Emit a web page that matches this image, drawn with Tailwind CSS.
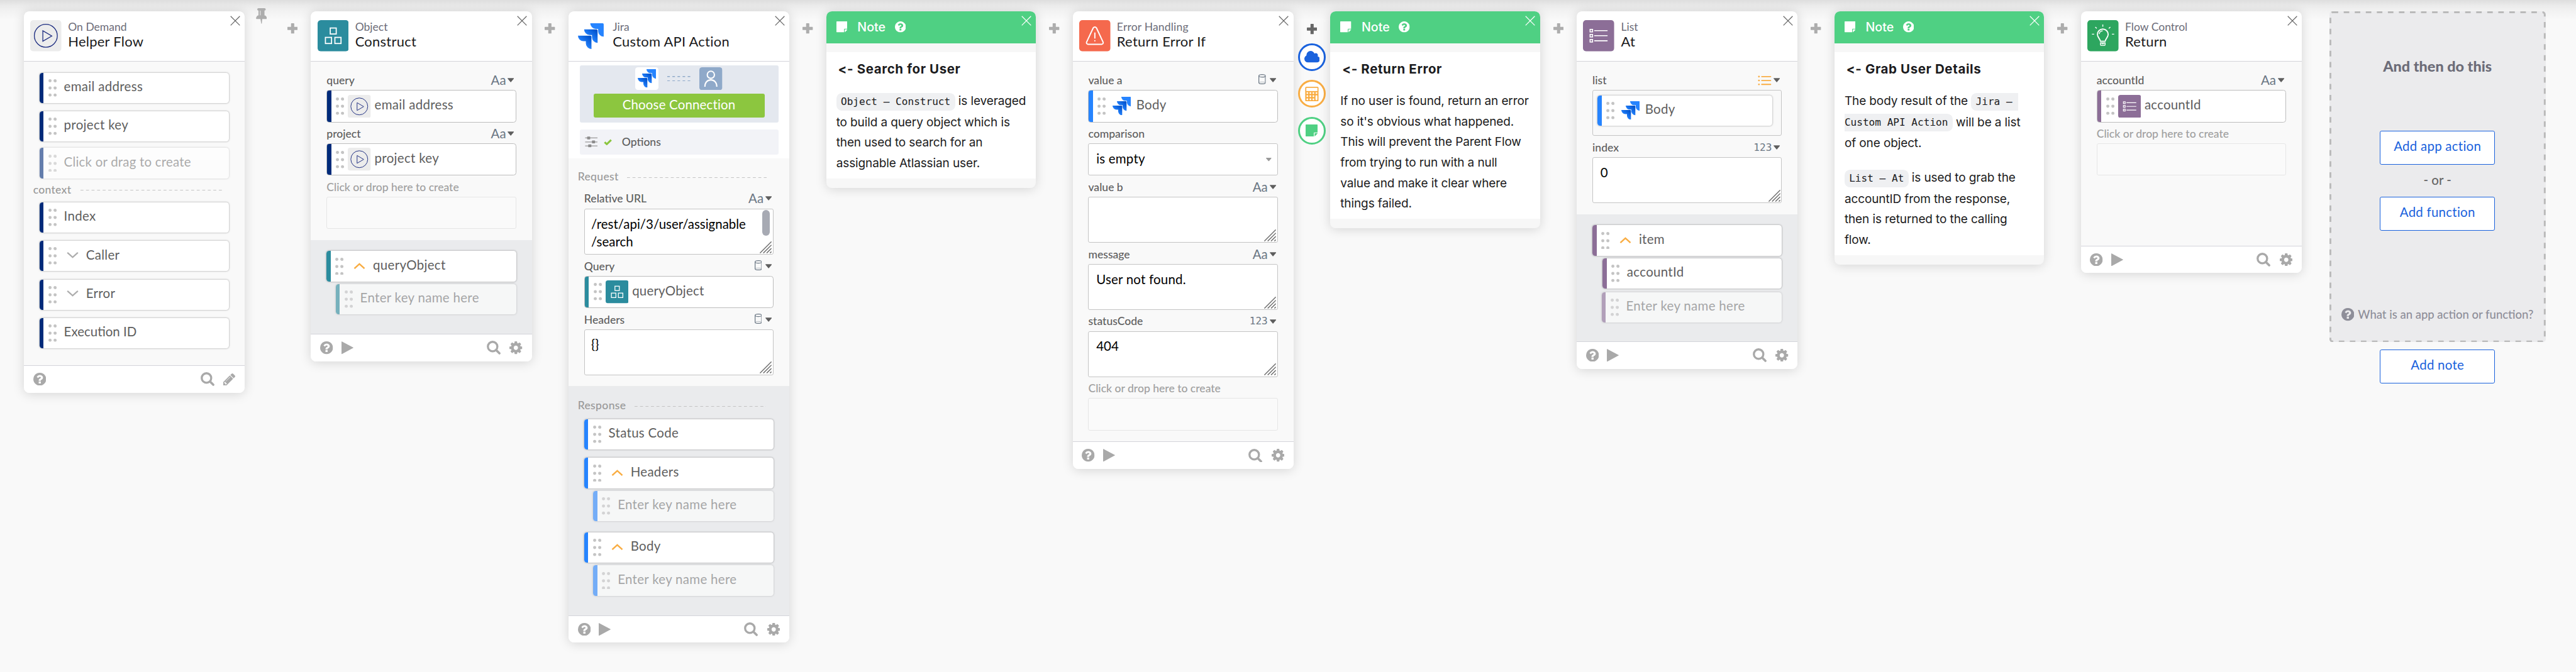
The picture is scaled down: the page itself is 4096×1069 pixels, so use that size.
<!DOCTYPE html>
<html lang="en" class="text-[23.4057px]">
<head>
<meta charset="utf-8">
<title>Helper Flow</title>
<script src="https://cdn.jsdelivr.net/npm/@tailwindcss/browser@4"></script>
</head>
<body class="h-screen overflow-hidden bg-[#f9f9f9] bg-[linear-gradient(#dedede_0,#ebebeb_0.375rem,#f2f2f2_0.75rem,#f9f9f9_1.375rem)] font-[Lato,sans-serif] text-sm text-[#5e5e5e] antialiased">

<!-- icon library -->
<svg class="absolute size-0">
  <defs>
    <linearGradient id="jg" x1="1" y1="0.1" x2="0.45" y2="0.7"><stop offset="0.1" stop-color="#0052cc"/><stop offset="1" stop-color="#2684ff"/></linearGradient>
  </defs>
  <symbol id="dots" viewBox="0 0 18 38"><g fill="#c4c4c4"><circle cx="3.5" cy="3.5" r="3.4"/><circle cx="14.5" cy="3.500" r="3.4"/><circle cx="3.5" cy="19" r="3.4"/><circle cx="14.5" cy="19" r="3.4"/><circle cx="3.5" cy="34.5" r="3.4"/><circle cx="14.5" cy="34.5" r="3.4"/></g></symbol>
  <symbol id="plus" viewBox="0 0 23 23"><path fill="currentColor" d="M9 0h5a1 1 0 0 1 1 1v7h7a1 1 0 0 1 1 1v5a1 1 0 0 1-1 1h-7v7a1 1 0 0 1-1 1H9a1 1 0 0 1-1-1v-7H1a1 1 0 0 1-1-1V9a1 1 0 0 1 1-1h7V1a1 1 0 0 1 1-1z"/></symbol>
  <symbol id="close" viewBox="0 0 22 22"><path d="M1 1l20 20M21 1L1 21" fill="none" stroke="currentColor" stroke-width="1.7"/></symbol>
  <symbol id="down" viewBox="0 0 25 14"><path d="M2 2l10.500 9.300L23 2" fill="none" stroke="currentColor" stroke-width="3.200" stroke-linecap="round"/></symbol>
  <symbol id="up" viewBox="0 0 25 14"><path d="M1.500 12.500L12.500 2.500l11 10" fill="none" stroke="currentColor" stroke-width="3.400"/></symbol>
  <symbol id="caret" viewBox="0 0 14 9"><path d="M.6 0h12.800a.6.6 0 0 1 .4 1L7.600 8.400a.8.8 0 0 1-1.200 0L.2 1a.6.6 0 0 1 .4-1z" fill="currentColor"/></symbol>
  <symbol id="help" viewBox="128 128 1536 1536"><path fill="currentColor" d="M1024 1376v-192q0-14-9-23t-23-9H800q-14 0-23 9t-9 23v192q0 14 9 23t23 9h192q14 0 23-9t9-23zm256-672q0-88-55.5-163T1086 425t-170-41q-243 0-371 213-15 24 8 42l132 100q7 6 19 6 16 0 25-12 53-68 86-92 34-24 86-24 48 0 85.5 26t37.5 59q0 38-20 61t-68 45q-63 28-115.5 86.5T768 1020v36q0 14 9 23t23 9h192q14 0 23-9t9-23q0-19 21.5-49.5T1100 957q32-18 49-28.500t46-35 44.5-48 28-60.5 12.5-81zm384 192q0 209-103 385.5T1281.5 1561 896 1664t-385.5-103T231 1281.5 128 896t103-385.5T510.5 231 896 128t385.5 103T1561 510.5 1664 896z"/></symbol>
  <symbol id="play" viewBox="0 0 25 27"><path fill="currentColor" d="M.8.3L24.500 13a.6.6 0 0 1 0 1L.8 26.700a.5.5 0 0 1-.8-.5V.8A.5.5 0 0 1 .8.3z"/></symbol>
  <symbol id="search" viewBox="0 0 29 29"><g fill="none" stroke="currentColor"><circle cx="12.300" cy="12.300" r="10" stroke-width="4.400"/><path d="M20 20l6.600 6.400" stroke-width="4.800" stroke-linecap="round"/></g></symbol>
  <symbol id="gear" viewBox="128 128 1536 1536"><path fill="currentColor" d="M1152 896q0-106-75-181t-181-75-181 75-75 181 75 181 181 75 181-75 75-181zm512-109v222q0 12-8 23t-20 13l-185 28q-19 54-39 91 35 50 107 138 10 12 10 25t-9 23q-27 37-99 108t-94 71q-12 0-26-9l-138-108q-44 23-91 38-16 136-29 186-7 28-36 28H785q-14 0-24.500-8.500T749 1634l-28-184q-49-16-90-37l-141 107q-10 9-25 9-14 0-25-11-126-114-165-168-7-10-7-23 0-12 8-23 15-21 51-66.500t54-70.500q-27-50-41-99l-183-27q-13-2-21-12.500t-8-23.500V783q0-12 8-23t19-13l186-28q14-46 39-92-40-57-107-138-10-12-10-24 0-10 9-23 26-36 98.500-107.500T465 263q13 0 26 10l138 107q44-23 91-38 16-136 29-186 7-28 36-28h222q14 0 24.500 8.500T1043 158l28 184q49 16 90 37l142-107q9-9 24-9 13 0 25 10 129 119 165 170 7 8 7 22 0 12-8 23-15 21-51 66.500t-54 70.500q26 50 41 98l183 28q13 2 21 12.500t8 23.500z"/></symbol>
  <symbol id="pencil" viewBox="128 149 1515 1515"><path fill="currentColor" d="M491 1536l91-91-235-235-91 91v107h128v128h107zm523-928q0-22-22-22-10 0-17 7l-542 542q-7 7-7 17 0 22 22 22 10 0 17-7l542-542q7-7 7-17zm-54-192l416 416-832 832H128v-416zm683 96q0 53-37 90l-166 166-416-416 166-165q36-38 90-38 53 0 91 38l235 234q37 39 37 91z"/></symbol>
  <symbol id="pin" viewBox="320 128 1152 1664"><path fill="currentColor" d="M800 864V416q0-14-9-23t-23-9-23 9-9 23v448q0 14 9 23t23 9 23-9 9-23zm672 352q0 26-19 45t-45 19H979l-51 483q-2 12-10.500 20.500T897 1792h-1q-27 0-32-27l-76-485H384q-26 0-45-19t-19-45q0-123 78.500-221.500T576 896V384q-52 0-90-38t-38-90 38-90 90-38h640q52 0 90 38t38 90-38 90-90 38v512q99 0 177.500 98.500T1472 1216z"/></symbol>
  <symbol id="sticky" viewBox="0 0 24 24"><path fill="currentColor" d="M1 0h22a1 1 0 0 1 1 1v15h-6.500a1 1 0 0 0-1 1v7H1a1 1 0 0 1-1-1V1a1 1 0 0 1 1-1zM24 17.500l-.2.7-5 5.200-.8.600v-6.500z"/></symbol>
  <symbol id="cloud" viewBox="64 128 1920 1408"><path fill="currentColor" d="M1984 1152q0 159-112.500 271.500T1600 1536H512q-185 0-316.500-131.500T64 1088q0-132 71-241.500T322 683q-2-28-2-43 0-212 150-362t362-150q158 0 286.500 88t187.500 230q70-62 166-62 106 0 181 75t75 181q0 75-41 138 129 30 213 134.500t84 239.500z"/></symbol>
  <symbol id="calc" viewBox="0 0 29 32"><rect width="29" height="32" rx="2.500" fill="currentColor"/><g fill="#fff"><rect x="2.400" y="2.400" width="24.200" height="7"/><circle cx="4.700" cy="13.800" r="2"/><circle cx="11.300" cy="13.800" r="2"/><circle cx="17.800" cy="13.800" r="2"/><circle cx="24.400" cy="13.800" r="2"/><circle cx="4.700" cy="20.500" r="2"/><circle cx="11.300" cy="20.500" r="2"/><circle cx="17.800" cy="20.500" r="2"/><circle cx="4.700" cy="27.300" r="2"/><circle cx="11.300" cy="27.300" r="2"/><circle cx="17.800" cy="27.300" r="2"/><rect x="22.400" y="18.500" width="4" height="10.800" rx="2"/></g></symbol>
  <symbol id="trigger" viewBox="0 0 68 68"><rect width="68" height="68" rx="7" fill="#ececec"/><g fill="none" stroke="#1c2c80" stroke-width="1.8"><circle cx="34" cy="34" r="25"/><path d="M27.500 23v23L47 34.500z"/></g></symbol>
  <symbol id="object" viewBox="0 0 68 68"><rect width="68" height="68" rx="7" fill="#2b8c9e"/><g fill="none" stroke="#fff" stroke-width="2.400"><rect x="27.500" y="17.200" width="13" height="13"/><rect x="17" y="37.600" width="13.300" height="13.300"/><rect x="37.600" y="37.600" width="13.300" height="13.300"/></g></symbol>
  <symbol id="list" viewBox="0 0 68 68"><rect width="68" height="68" rx="7" fill="#8c6e97"/><g fill="none" stroke="#fff" stroke-width="2.200"><rect x="15.500" y="20.200" width="5.400" height="5.400"/><rect x="15.500" y="31.200" width="5.400" height="5.400"/><rect x="15.500" y="42.200" width="5.400" height="5.400"/><path d="M24.500 22.900h29M24.500 33.900h29M24.500 44.900h29"/></g></symbol>
  <symbol id="alert" viewBox="0 0 68 68"><rect width="68" height="68" rx="7" fill="#f5694d"/><g fill="none" stroke="#fff" stroke-width="2.700" stroke-linecap="round" stroke-linejoin="round"><path d="M30.600 16.800a4 4 0 0 1 6.800 0L52 48a3.300 3.300 0 0 1-3 4.500H19a3.300 3.300 0 0 1-3-4.500z"/><path d="M34 28v11M34 44.800v.4"/></g></symbol>
  <symbol id="bulb" viewBox="0 0 68 68"><rect width="68" height="68" rx="7" fill="#2da65f"/><g fill="none" stroke="#fff" stroke-width="2.500"><path d="M28.500 46c0-4.500-6.600-8-6.600-14.800a11.700 11.700 0 0 1 23.400 0C45.300 38 38.700 41.500 38.700 46z" stroke-linejoin="round"/><path d="M25.800 30.500a8 8 0 0 1 7.500-7.300M28.600 49.600h10v3.800a1.800 1.800 0 0 1-1.800 1.800h-6.400a1.800 1.800 0 0 1-1.800-1.800zM31 51.800h5.200" stroke-width="2"/><path d="M10 30.600h4.800M53.500 30.600h4.800M33.600 9.500v4.800M17.300 15l3.200 3.200M50 15l-3.300 3.200" stroke-width="2"/></g></symbol>
  <symbol id="jira" viewBox="0 0 24 24"><path fill="#2684ff" d="M23.013 0H11.455a5.215 5.215 0 0 0 5.215 5.215h2.129v2.057A5.215 5.215 0 0 0 24 12.483V1.005A1.001 1.001 0 0 0 23.013 0z"/><path fill="url(#jg)" d="M17.294 5.757H5.736a5.215 5.215 0 0 0 5.215 5.214h2.129v2.058a5.218 5.218 0 0 0 5.215 5.214V6.758a1.001 1.001 0 0 0-1.001-1.001z"/><path fill="url(#jg)" d="M11.571 11.513H0a5.218 5.218 0 0 0 5.232 5.215h2.130v2.057A5.215 5.215 0 0 0 12.575 24V12.518a1.005 1.005 0 0 0-1.005-1.005z"/></symbol>
  <symbol id="user" viewBox="0 0 50 50"><rect width="50" height="50" rx="6" fill="#8fa9c9"/><g fill="none" stroke="#fff" stroke-width="2.800"><circle cx="25" cy="16.300" r="7.800"/><path d="M12 42.300C12 33 17.500 27.500 25 27.500S38 33 38 42.300"/></g></symbol>
  <symbol id="cyl" viewBox="0 0 16 22"><g fill="none" stroke="#6b7784" stroke-width="1.700"><ellipse cx="8" cy="3.600" rx="7.100" ry="2.700"/><path d="M.9 3.600v14.800c0 1.600 3.200 2.700 7.100 2.700s7.100-1.100 7.100-2.700V3.600"/><path d="M2 18c2-1.400 10-1.400 12 0" stroke-width="1" stroke-dasharray="1.500 1"/></g></symbol>
  <symbol id="rows" viewBox="0 0 29 22"><g stroke="#f9ad43" stroke-width="2.400" stroke-linecap="round"><path d="M8 2.500h19.500M8 11h19.500M8 19.500h19.500"/><path d="M1.900 2.500h.2M1.900 11h.2M1.900 19.500h.2" stroke-width="3.600"/></g></symbol>
  <symbol id="sliders" viewBox="0 0 28 25"><path d="M0 3.500h28M0 12.500h28M0 21.500h28" stroke="#999" stroke-width="1.800"/><g fill="#8c8c8c"><rect x="4.500" y=".3" width="7" height="6.500" rx="1"/><rect x="15.500" y="9.200" width="7" height="6.500" rx="1"/><rect x="7" y="18.200" width="7" height="6.500" rx="1"/></g></symbol>
  <symbol id="check" viewBox="0 0 17 13"><path d="M1.800 6.600l4.400 4L15.200 2" fill="none" stroke="#8bc53f" stroke-width="4"/></symbol>
  <symbol id="grip" viewBox="0 0 25 25"><path d="M.5 24.500l24-24M7.500 24.500l17-17M14.500 24.500l10-10M21.500 24.500l3-3" fill="none" stroke="#6f6f6f" stroke-width="1.900"/></symbol>
</svg>

<main class="flex items-start pt-3 pl-6.5">

  <!-- On Demand: Helper Flow -->
  <section class="w-60 shrink-0 overflow-hidden rounded-md bg-[#f9f9f9] shadow-[0_0.0625rem_0.75rem_rgba(0,0,0,0.15)]">
    <header class="flex h-13.75 border-b border-[#d4d4da] bg-white pt-2.5 pr-[0.3125rem] pl-1.75">
      <svg class="size-8.5 shrink-0"><use href="#trigger"/></svg>
      <div class="mt-[-0.0625rem] ml-1.75 grow">
        <p class="text-xs leading-4 text-[#6c6c78]">On Demand</p>
        <h2 class="text-[0.9375rem] leading-4 tracking-[0.012em] text-[#1b1b20]">Helper Flow</h2>
      </div>
      <svg class="-mt-1.25 size-2.75 text-[#666]"><use href="#close"/></svg>
    </header>
    <div class="px-4.25 pt-3 pb-4.5 tracking-[0.015em]">
      <div class="flex h-8.25 items-center overflow-hidden rounded-[0.1875rem] bg-white shadow-[0_0_0.125rem_rgba(0,0,0,0.4)]"><i class="h-full w-[0.28rem] bg-[#002b7a]"></i><svg class="ml-1.25 h-4.75 w-2.25"><use href="#dots"/></svg><span class="ml-2 pb-[0.1875rem]">email address</span></div>
      <div class="mt-2.25 flex h-8.25 items-center overflow-hidden rounded-[0.1875rem] bg-white shadow-[0_0_0.125rem_rgba(0,0,0,0.4)]"><i class="h-full w-[0.28rem] bg-[#002b7a]"></i><svg class="ml-1.25 h-4.75 w-2.25"><use href="#dots"/></svg><span class="ml-2 pb-[0.1875rem]">project key</span></div>
      <div class="mt-1.75 flex h-8.25 items-center overflow-hidden rounded-[0.1875rem] bg-white opacity-60 shadow-[0_0_0.125rem_rgba(0,0,0,0.35)]"><i class="h-full w-[0.28rem] bg-[#002b7a]"></i><svg class="ml-1.25 h-4.75 w-2.25"><use href="#dots"/></svg><span class="ml-2 pb-[0.1875rem] tracking-[0.01em] text-[#777]">Click or drag to create</span></div>
      <div class="-ml-1.75 flex h-6.5 items-center text-xs font-medium text-[#999]"><span class="pb-[0.0625rem]">context</span><svg class="ml-2.5 h-0.25 w-39"><path d="M0 0.8H400" stroke="#c4c4c4" stroke-width="1.4" stroke-dasharray="4.7 4.1"/></svg></div>
      <div class="flex h-8.25 items-center overflow-hidden rounded-[0.1875rem] bg-white shadow-[0_0_0.125rem_rgba(0,0,0,0.4)]"><i class="h-full w-[0.28rem] bg-[#002b7a]"></i><svg class="ml-1.25 h-4.75 w-2.25"><use href="#dots"/></svg><span class="ml-2 pb-[0.1875rem]">Index</span></div>
      <div class="mt-2.25 flex h-8.25 items-center overflow-hidden rounded-[0.1875rem] bg-white shadow-[0_0_0.125rem_rgba(0,0,0,0.4)]"><i class="h-full w-[0.28rem] bg-[#002b7a]"></i><svg class="ml-1.25 h-4.75 w-2.25"><use href="#dots"/></svg><svg class="-mt-0.5 ml-2.75 h-1.75 w-3.25 text-[#adadad]"><use href="#down"/></svg><span class="ml-2 pb-[0.1875rem]">Caller</span></div>
      <div class="mt-2.25 flex h-8.25 items-center overflow-hidden rounded-[0.1875rem] bg-white shadow-[0_0_0.125rem_rgba(0,0,0,0.4)]"><i class="h-full w-[0.28rem] bg-[#002b7a]"></i><svg class="ml-1.25 h-4.75 w-2.25"><use href="#dots"/></svg><svg class="-mt-0.5 ml-2.75 h-1.75 w-3.25 text-[#adadad]"><use href="#down"/></svg><span class="ml-2 pb-[0.1875rem]">Error</span></div>
      <div class="mt-2.25 flex h-8.25 items-center overflow-hidden rounded-[0.1875rem] bg-white shadow-[0_0_0.125rem_rgba(0,0,0,0.4)]"><i class="h-full w-[0.28rem] bg-[#002b7a]"></i><svg class="ml-1.25 h-4.75 w-2.25"><use href="#dots"/></svg><span class="ml-2 pb-[0.1875rem] tracking-normal">Execution ID</span></div>
    </div>
    <footer class="flex h-7.5 items-center border-t border-[#d4d4da] bg-white px-2.5 text-[#a9a9a9]">
      <svg class="size-3.5"><use href="#help"/></svg><svg class="ml-auto size-3.75"><use href="#search"/></svg><svg class="ml-2.5 size-3.25"><use href="#pencil"/></svg>
    </footer>
  </section>
  <div class="flex w-18 shrink-0 text-[#adadad]">
    <svg class="-mt-0.75 ml-3 h-4.25 w-3"><use href="#pin"/></svg>
    <svg class="mt-[0.83rem] ml-[1.39rem] size-[0.71rem]"><use href="#plus"/></svg>
  </div>

  <!-- Object: Construct -->
  <section class="w-60 shrink-0 overflow-hidden rounded-md bg-[#f9f9f9] shadow-[0_0.0625rem_0.75rem_rgba(0,0,0,0.15)]">
    <header class="flex h-13.75 border-b border-[#d4d4da] bg-white pt-2.5 pr-[0.3125rem] pl-1.75">
      <svg class="size-8.5 shrink-0"><use href="#object"/></svg>
      <div class="mt-[-0.0625rem] ml-1.75 grow">
        <p class="text-xs leading-4 text-[#6c6c78]">Object</p>
        <h2 class="text-[0.9375rem] leading-4 tracking-[0.012em] text-[#1b1b20]">Construct</h2>
      </div>
      <svg class="-mt-1.25 size-2.75 text-[#666]"><use href="#close"/></svg>
    </header>
    <div class="px-4.25 pt-2 pb-3">
      <div class="flex h-5.75 items-center pt-0.5 pr-0.5 text-xs font-medium"><span>query</span><span class="ml-auto text-sm font-normal text-[#6b7784]">Aa</span><svg class="ml-0.5 h-1.25 w-1.75"><use href="#caret"/></svg></div>
      <div class="flex h-8.75 items-center overflow-hidden rounded-[0.1875rem] border border-[#bdbdbd] bg-white tracking-[0.015em]"><i class="h-full w-[0.28rem] bg-[#002b7a]"></i><svg class="ml-1.25 h-4.75 w-2.25"><use href="#dots"/></svg><svg class="ml-1 size-6.25"><use href="#trigger"/></svg><span class="ml-1 pb-[0.1875rem]">email address</span></div>
      <div class="flex h-5.75 items-center pt-0.5 pr-0.5 text-xs font-medium"><span>project</span><span class="ml-auto text-sm font-normal text-[#6b7784]">Aa</span><svg class="ml-0.5 h-1.25 w-1.75"><use href="#caret"/></svg></div>
      <div class="flex h-8.75 items-center overflow-hidden rounded-[0.1875rem] border border-[#bdbdbd] bg-white tracking-[0.015em]"><i class="h-full w-[0.28rem] bg-[#002b7a]"></i><svg class="ml-1.25 h-4.75 w-2.25"><use href="#dots"/></svg><svg class="ml-1 size-6.25"><use href="#trigger"/></svg><span class="ml-1 pb-[0.1875rem]">project key</span></div>
      <div class="flex h-5.75 items-center pt-0.5 text-xs font-medium text-[#a0a0a0]">Click or drop here to create</div>
      <div class="h-8.75 rounded-[0.125rem] border border-[#e6e6e6] bg-[#fafafa]"></div>
    </div>
    <div class="h-25.5 bg-[#eaebed] px-4.25 pt-3 tracking-[0.015em]">
      <div class="flex h-8.25 items-center overflow-hidden rounded-[0.1875rem] bg-white shadow-[0_0_0.125rem_rgba(0,0,0,0.4)]"><i class="h-full w-[0.28rem] bg-[#2b8c9e]"></i><svg class="ml-1.25 h-4.75 w-2.25"><use href="#dots"/></svg><svg class="-mt-0.25 ml-2.75 h-1.75 w-3.25 text-[#f9ad43]"><use href="#up"/></svg><span class="ml-2 pb-[0.1875rem]">queryObject</span></div>
      <div class="mt-0.75 ml-2.5 flex h-8.25 items-center overflow-hidden rounded-[0.1875rem] bg-white opacity-60 shadow-[0_0_0.125rem_rgba(0,0,0,0.35)]"><i class="h-full w-[0.28rem] bg-[#2b8c9e]"></i><svg class="ml-1.25 h-4.75 w-2.25"><use href="#dots"/></svg><span class="ml-2 pb-[0.1875rem] text-[#777]">Enter key name here</span></div>
    </div>
    <footer class="flex h-7.5 items-center border-t border-[#d4d4da] bg-white px-2.5 text-[#a9a9a9]">
      <svg class="size-3.5"><use href="#help"/></svg><svg class="ml-2.25 h-3.5 w-3.25"><use href="#play"/></svg><svg class="ml-auto size-3.75"><use href="#search"/></svg><svg class="ml-2.5 size-3.5"><use href="#gear"/></svg>
    </footer>
  </section>
  <div class="flex w-10 shrink-0 justify-center pt-[0.83rem] text-[#adadad]"><svg class="size-[0.71rem]"><use href="#plus"/></svg></div>

  <!-- Jira: Custom API Action -->
  <section class="w-60 shrink-0 overflow-hidden rounded-md bg-[#f9f9f9] shadow-[0_0.0625rem_0.75rem_rgba(0,0,0,0.15)]">
    <header class="flex h-13.75 border-b border-[#d4d4da] bg-white pt-2.5 pr-[0.3125rem] pl-1.75">
      <svg class="m-0.75 size-7 shrink-0"><use href="#jira"/></svg>
      <div class="mt-[-0.0625rem] ml-1.75 grow">
        <p class="text-xs leading-4 text-[#6c6c78]">Jira</p>
        <h2 class="text-[0.9375rem] leading-4 tracking-[0.012em] text-[#1b1b20]">Custom API Action</h2>
      </div>
      <svg class="-mt-1.25 size-2.75 text-[#666]"><use href="#close"/></svg>
    </header>
    <div class="bg-white px-3 pt-1 pb-1">
      <div class="flex h-15.5 flex-col items-center rounded-[0.125rem] bg-[#e4e8ef] pt-0.5">
        <div class="flex items-center">
          <div class="flex size-6.25 items-center justify-center rounded-[0.1875rem] bg-white"><svg class="size-5"><use href="#jira"/></svg></div>
          <svg class="mx-2.5 h-1.5 w-6.25" viewBox="0 0 50 12"><path d="M0 1h50M0 10.500h50" stroke="#8fa9c9" stroke-width="2" stroke-dasharray="5.600 5.500"/></svg>
          <svg class="size-6.25"><use href="#user"/></svg>
        </div>
        <button class="mt-1 h-6.5 w-46.5 rounded-[0.125rem] bg-[#8cc63f] pb-[0.125rem] text-sm tracking-[0.008em] text-white">Choose Connection</button>
      </div>
      <div class="mt-2 flex h-6.75 items-center rounded-[0.125rem] bg-[#f2f3f7] pl-1.5">
        <svg class="h-3 w-3.5"><use href="#sliders"/></svg><svg class="ml-1.5 h-1.75 w-2.25"><use href="#check"/></svg><span class="ml-2.75 pb-[0.0625rem] text-xs font-medium">Options</span>
      </div>
    </div>
    <div class="px-4.25 pt-2.5 pb-3">
      <div class="-ml-1.75 flex h-5 items-center text-xs font-medium text-[#999]"><span class="tracking-[0.02em]">Request</span><svg class="mt-0.5 ml-2.25 h-0.25 w-38"><path d="M0 0.8H400" stroke="#c4c4c4" stroke-width="1.4" stroke-dasharray="4.7 4"/></svg></div>
      <div class="mt-0.5 flex h-5.75 items-center pt-0.25 pr-0.5 text-xs font-medium"><span>Relative URL</span><span class="ml-auto text-sm font-normal text-[#6b7784]">Aa</span><svg class="ml-0.5 h-1.25 w-1.75"><use href="#caret"/></svg></div>
      <div class="relative h-12.5 rounded-[0.125rem] border border-[#c4c4c4] bg-white pt-[0.375rem] pl-1.75 leading-[1.2rem] text-black">/rest/api/3/user/assignable<br>/search
        <i class="absolute top-[0.0625rem] right-[0.22rem] h-7 w-2 rounded-full bg-[#a7aab3]"></i>
        <svg class="absolute right-[0.08rem] bottom-[0.06rem] size-3.25"><use href="#grip"/></svg>
      </div>
      <div class="flex h-5.75 items-center pt-0.5 pr-0.5 text-xs font-medium"><span>Query</span><svg class="-mt-0.5 ml-auto h-2.75 w-2"><use href="#cyl"/></svg><svg class="ml-1 h-1.25 w-1.75"><use href="#caret"/></svg></div>
      <div class="flex h-8.75 items-center overflow-hidden rounded-[0.1875rem] border border-[#bdbdbd] bg-white"><i class="h-full w-[0.28rem] bg-[#2b8c9e]"></i><svg class="ml-1.25 h-4.75 w-2.25"><use href="#dots"/></svg><svg class="ml-1 size-6.25"><use href="#object"/></svg><span class="ml-1 pb-[0.1875rem] tracking-[0.01em]">queryObject</span></div>
      <div class="flex h-5.75 items-center pt-0.5 pr-0.5 text-xs font-medium"><span>Headers</span><svg class="-mt-0.5 ml-auto h-2.75 w-2"><use href="#cyl"/></svg><svg class="ml-1 h-1.25 w-1.75"><use href="#caret"/></svg></div>
      <div class="relative h-12.5 rounded-[0.125rem] border border-[#c4c4c4] bg-white pt-[0.375rem] pl-1.75 leading-[1.2rem] text-black">{}
        <svg class="absolute right-[0.08rem] bottom-[0.06rem] size-3.25"><use href="#grip"/></svg>
      </div>
    </div>
    <div class="h-62.25 bg-[#eaebed] px-4.25 pt-2.75 tracking-[0.015em]">
      <div class="-ml-1.75 mb-1.25 flex h-5 items-center text-xs font-medium text-[#999]"><span class="tracking-[0.02em]">Response</span><svg class="mt-0.5 ml-2.25 h-0.25 w-35.75"><path d="M0 0.8H400" stroke="#c4c4c4" stroke-width="1.4" stroke-dasharray="4.7 4"/></svg></div>
      <div class="flex h-8.25 items-center overflow-hidden rounded-[0.1875rem] bg-white shadow-[0_0_0.125rem_rgba(0,0,0,0.4)]"><i class="h-full w-[0.28rem] bg-[#2684ff]"></i><svg class="ml-1.25 h-4.75 w-2.25"><use href="#dots"/></svg><span class="ml-2 pb-[0.1875rem]">Status Code</span></div>
      <div class="mt-2.25 flex h-8.25 items-center overflow-hidden rounded-[0.1875rem] bg-white shadow-[0_0_0.125rem_rgba(0,0,0,0.4)]"><i class="h-full w-[0.28rem] bg-[#2684ff]"></i><svg class="ml-1.25 h-4.75 w-2.25"><use href="#dots"/></svg><svg class="-mt-0.25 ml-2.75 h-1.75 w-3.25 text-[#f9ad43]"><use href="#up"/></svg><span class="ml-2 pb-[0.1875rem]">Headers</span></div>
      <div class="mt-0.75 ml-2.5 flex h-8.25 items-center overflow-hidden rounded-[0.1875rem] bg-white opacity-60 shadow-[0_0_0.125rem_rgba(0,0,0,0.35)]"><i class="h-full w-[0.28rem] bg-[#2684ff]"></i><svg class="ml-1.25 h-4.75 w-2.25"><use href="#dots"/></svg><span class="ml-2 pb-[0.1875rem] text-[#777]">Enter key name here</span></div>
      <div class="mt-3 flex h-8.25 items-center overflow-hidden rounded-[0.1875rem] bg-white shadow-[0_0_0.125rem_rgba(0,0,0,0.4)]"><i class="h-full w-[0.28rem] bg-[#2684ff]"></i><svg class="ml-1.25 h-4.75 w-2.25"><use href="#dots"/></svg><svg class="-mt-0.25 ml-2.75 h-1.75 w-3.25 text-[#f9ad43]"><use href="#up"/></svg><span class="ml-2 pb-[0.1875rem]">Body</span></div>
      <div class="mt-0.75 ml-2.5 flex h-8.25 items-center overflow-hidden rounded-[0.1875rem] bg-white opacity-60 shadow-[0_0_0.125rem_rgba(0,0,0,0.35)]"><i class="h-full w-[0.28rem] bg-[#2684ff]"></i><svg class="ml-1.25 h-4.75 w-2.25"><use href="#dots"/></svg><span class="ml-2 pb-[0.1875rem] text-[#777]">Enter key name here</span></div>
    </div>
    <footer class="flex h-7.5 items-center border-t border-[#d4d4da] bg-white px-2.5 text-[#a9a9a9]">
      <svg class="size-3.5"><use href="#help"/></svg><svg class="ml-2.25 h-3.5 w-3.25"><use href="#play"/></svg><svg class="ml-auto size-3.75"><use href="#search"/></svg><svg class="ml-2.5 size-3.5"><use href="#gear"/></svg>
    </footer>
  </section>
  <div class="flex w-10 shrink-0 justify-center pt-[0.83rem] text-[#adadad]"><svg class="size-[0.71rem]"><use href="#plus"/></svg></div>

  <!-- Note: Search for User -->
  <section class="w-57 shrink-0 overflow-hidden rounded-md bg-[#f7f7f7] pb-2.5 font-[Inter,sans-serif] whitespace-nowrap text-[#1b1b20] shadow-[0_0.0625rem_0.75rem_rgba(0,0,0,0.15)]">
    <header class="flex h-8.75 items-center bg-[#4fd083] pr-[0.3125rem] pl-2.75 text-white">
      <svg class="size-3"><use href="#sticky"/></svg><h2 class="ml-2.75 text-[0.84rem] font-medium">Note</h2><svg class="ml-2.5 size-3"><use href="#help"/></svg><svg class="mb-3.5 ml-auto size-2.75"><use href="#close"/></svg>
    </header>
    <div class="mt-2.5 bg-white px-2.75 pt-[0.45rem] pb-[0.33rem] text-[0.8125rem] leading-[1.3925rem] tracking-[-0.006em]">
      <h3 class="ml-0.5 text-sm leading-[1.3925rem] font-bold tracking-[0.03em]">&lt;- Search for User</h3>
      <p class="mt-[0.8rem]"><code class="rounded-md bg-[#eff0f2] px-1.25 py-[0.1875rem] font-['DejaVu_Sans_Mono',monospace] text-[0.6875rem] tracking-normal whitespace-pre">Object – Construct</code> is leveraged<br>to build a query object which is<br>then used to search for an<br>assignable Atlassian user.</p>
    </div>
  </section>
  <div class="flex w-10 shrink-0 justify-center pt-[0.83rem] text-[#adadad]"><svg class="size-[0.71rem]"><use href="#plus"/></svg></div>

  <!-- Error Handling: Return Error If -->
  <section class="w-60 shrink-0 overflow-hidden rounded-md bg-[#f9f9f9] shadow-[0_0.0625rem_0.75rem_rgba(0,0,0,0.15)]">
    <header class="flex h-13.75 border-b border-[#d4d4da] bg-white pt-2.5 pr-[0.3125rem] pl-1.75">
      <svg class="size-8.5 shrink-0"><use href="#alert"/></svg>
      <div class="mt-[-0.0625rem] ml-1.75 grow">
        <p class="text-xs leading-4 tracking-[0.01em] text-[#6c6c78]">Error Handling</p>
        <h2 class="text-[0.9375rem] leading-4 tracking-[0.012em] text-[#1b1b20]">Return Error If</h2>
      </div>
      <svg class="-mt-1.25 size-2.75 text-[#666]"><use href="#close"/></svg>
    </header>
    <div class="px-4.25 pt-2 pb-3">
      <div class="flex h-5.75 items-center pt-0.5 pr-0.5 text-xs font-medium"><span>value a</span><svg class="-mt-0.5 ml-auto h-2.75 w-2"><use href="#cyl"/></svg><svg class="ml-1 h-1.25 w-1.75"><use href="#caret"/></svg></div>
      <div class="flex h-8.75 items-center overflow-hidden rounded-[0.1875rem] border border-[#bdbdbd] bg-white"><i class="h-full w-[0.28rem] bg-[#2684ff]"></i><svg class="ml-1.25 h-4.75 w-2.25"><use href="#dots"/></svg><svg class="ml-1.75 size-5"><use href="#jira"/></svg><span class="ml-1.5 pb-[0.1875rem] tracking-[0.015em]">Body</span></div>
      <div class="flex h-5.75 items-center pt-0.5 text-xs font-medium">comparison</div>
      <div class="flex h-8.75 items-center rounded-[0.125rem] border border-[#c4c4c4] bg-white pr-1.5 pl-2 text-black"><span class="pb-[0.125rem] tracking-[0.01em]">is empty</span><svg class="ml-auto h-1 w-1.5 text-[#999]"><use href="#caret"/></svg></div>
      <div class="flex h-5.75 items-center pt-0.5 pr-0.5 text-xs font-medium"><span>value b</span><span class="ml-auto text-sm font-normal text-[#6b7784]">Aa</span><svg class="ml-0.5 h-1.25 w-1.75"><use href="#caret"/></svg></div>
      <div class="relative h-12.5 rounded-[0.125rem] border border-[#c4c4c4] bg-white"><svg class="absolute right-[0.08rem] bottom-[0.06rem] size-3.25"><use href="#grip"/></svg></div>
      <div class="flex h-5.75 items-center pt-0.5 pr-0.5 text-xs font-medium"><span>message</span><span class="ml-auto text-sm font-normal text-[#6b7784]">Aa</span><svg class="ml-0.5 h-1.25 w-1.75"><use href="#caret"/></svg></div>
      <div class="relative h-12.5 rounded-[0.125rem] border border-[#c4c4c4] bg-white pt-[0.375rem] pl-2 leading-[1.2rem] tracking-[0.01em] text-black">User not found.<svg class="absolute right-[0.08rem] bottom-[0.06rem] size-3.25"><use href="#grip"/></svg></div>
      <div class="flex h-5.75 items-center pt-0.5 pr-0.5 text-xs font-medium"><span>statusCode</span><span class="ml-auto font-['DejaVu_Sans_Mono',monospace] text-[0.6875rem] font-normal text-[#6b7784]">123</span><svg class="ml-0.5 h-1.25 w-1.75"><use href="#caret"/></svg></div>
      <div class="relative h-12.5 rounded-[0.125rem] border border-[#c4c4c4] bg-white pt-[0.375rem] pl-2 leading-[1.2rem] text-black">404<svg class="absolute right-[0.08rem] bottom-[0.06rem] size-3.25"><use href="#grip"/></svg></div>
      <div class="flex h-5.75 items-center pt-0.5 text-xs font-medium text-[#a0a0a0]">Click or drop here to create</div>
      <div class="h-8.75 rounded-[0.125rem] border border-[#e6e6e6] bg-[#fafafa]"></div>
    </div>
    <footer class="flex h-7.5 items-center border-t border-[#d4d4da] bg-white px-2.5 text-[#a9a9a9]">
      <svg class="size-3.5"><use href="#help"/></svg><svg class="ml-2.25 h-3.5 w-3.25"><use href="#play"/></svg><svg class="ml-auto size-3.75"><use href="#search"/></svg><svg class="ml-2.5 size-3.5"><use href="#gear"/></svg>
    </footer>
  </section>
  <div class="flex w-10 shrink-0 flex-col items-center gap-2.5 pt-[0.89rem]">
    <svg class="size-[0.71rem] text-[#666]"><use href="#plus"/></svg>
    <div class="mt-[-0.03rem] flex size-7.5 items-center justify-center rounded-full border-3 border-[#1a62dd] bg-white text-[#1a62dd]"><svg class="-mt-0.25 h-3.5 w-4.25"><use href="#cloud"/></svg></div>
    <div class="flex size-7.5 items-center justify-center rounded-full border-3 border-[#f9ad43] bg-white text-[#f9ad43]"><svg class="h-4 w-3.75"><use href="#calc"/></svg></div>
    <div class="flex size-7.5 items-center justify-center rounded-full border-3 border-[#4fd083] bg-white text-[#4fd083]"><svg class="size-3.25"><use href="#sticky"/></svg></div>
  </div>

  <!-- Note: Return Error -->
  <section class="w-57 shrink-0 overflow-hidden rounded-md bg-[#f7f7f7] pb-2.5 font-[Inter,sans-serif] whitespace-nowrap text-[#1b1b20] shadow-[0_0.0625rem_0.75rem_rgba(0,0,0,0.15)]">
    <header class="flex h-8.75 items-center bg-[#4fd083] pr-[0.3125rem] pl-2.75 text-white">
      <svg class="size-3"><use href="#sticky"/></svg><h2 class="ml-2.75 text-[0.84rem] font-medium">Note</h2><svg class="ml-2.5 size-3"><use href="#help"/></svg><svg class="mb-3.5 ml-auto size-2.75"><use href="#close"/></svg>
    </header>
    <div class="mt-2.5 bg-white px-2.75 pt-[0.45rem] pb-[0.33rem] text-[0.8125rem] leading-[1.3925rem] tracking-[-0.006em]">
      <h3 class="ml-0.5 text-sm leading-[1.3925rem] font-bold tracking-[0.03em]">&lt;- Return Error</h3>
      <p class="mt-[0.8rem]">If no user is found, return an error<br>so it's obvious what happened.<br>This will prevent the Parent Flow<br>from trying to run with a null<br>value and make it clear where<br>things failed.</p>
    </div>
  </section>
  <div class="flex w-10 shrink-0 justify-center pt-[0.83rem] text-[#adadad]"><svg class="size-[0.71rem]"><use href="#plus"/></svg></div>

  <!-- List: At -->
  <section class="w-60 shrink-0 overflow-hidden rounded-md bg-[#f9f9f9] shadow-[0_0.0625rem_0.75rem_rgba(0,0,0,0.15)]">
    <header class="flex h-13.75 border-b border-[#d4d4da] bg-white pt-2.5 pr-[0.3125rem] pl-1.75">
      <svg class="size-8.5 shrink-0"><use href="#list"/></svg>
      <div class="mt-[-0.0625rem] ml-1.75 grow">
        <p class="text-xs leading-4 text-[#6c6c78]">List</p>
        <h2 class="text-[0.9375rem] leading-4 tracking-[0.012em] text-[#1b1b20]">At</h2>
      </div>
      <svg class="-mt-1.25 size-2.75 text-[#666]"><use href="#close"/></svg>
    </header>
    <div class="px-4.25 pt-2 pb-3">
      <div class="flex h-5.75 items-center pt-0.5 pr-0.5 text-xs font-medium"><span>list</span><svg class="ml-auto h-2.75 w-3.75"><use href="#rows"/></svg><svg class="ml-0.5 h-1.25 w-1.75"><use href="#caret"/></svg></div>
      <div class="h-12.5 rounded-[0.125rem] border border-[#c4c4c4] pt-1.25 pr-2.5 pl-1.25">
        <div class="flex h-8.25 items-center overflow-hidden rounded-[0.1875rem] bg-white shadow-[0_0_0.125rem_rgba(0,0,0,0.4)]"><i class="h-full w-[0.28rem] bg-[#2684ff]"></i><svg class="ml-1.25 h-4.75 w-2.25"><use href="#dots"/></svg><svg class="ml-1.75 size-5"><use href="#jira"/></svg><span class="ml-1.5 pb-[0.1875rem] tracking-[0.015em]">Body</span></div>
      </div>
      <div class="flex h-5.75 items-center pt-0.5 pr-0.5 text-xs font-medium"><span>index</span><span class="ml-auto font-['DejaVu_Sans_Mono',monospace] text-[0.6875rem] font-normal text-[#6b7784]">123</span><svg class="ml-0.5 h-1.25 w-1.75"><use href="#caret"/></svg></div>
      <div class="relative h-12.5 rounded-[0.125rem] border border-[#c4c4c4] bg-white pt-[0.375rem] pl-2 leading-[1.2rem] text-black">0<svg class="absolute right-[0.08rem] bottom-[0.06rem] size-3.25"><use href="#grip"/></svg></div>
    </div>
    <div class="h-34.5 bg-[#eaebed] px-4.25 pt-3 tracking-[0.015em]">
      <div class="flex h-8.25 items-center overflow-hidden rounded-[0.1875rem] bg-white shadow-[0_0_0.125rem_rgba(0,0,0,0.4)]"><i class="h-full w-[0.28rem] bg-[#8c6e97]"></i><svg class="ml-1.25 h-4.75 w-2.25"><use href="#dots"/></svg><svg class="-mt-0.25 ml-2.75 h-1.75 w-3.25 text-[#f9ad43]"><use href="#up"/></svg><span class="ml-2 pb-[0.1875rem]">item</span></div>
      <div class="mt-0.75 ml-2.75 flex h-8.25 items-center overflow-hidden rounded-[0.1875rem] bg-white shadow-[0_0_0.125rem_rgba(0,0,0,0.4)]"><i class="h-full w-[0.28rem] bg-[#8c6e97]"></i><svg class="ml-1.25 h-4.75 w-2.25"><use href="#dots"/></svg><span class="ml-2 pb-[0.1875rem]">accountId</span></div>
      <div class="mt-1 ml-2.5 flex h-8.25 items-center overflow-hidden rounded-[0.1875rem] bg-white opacity-60 shadow-[0_0_0.125rem_rgba(0,0,0,0.35)]"><i class="h-full w-[0.28rem] bg-[#8c6e97]"></i><svg class="ml-1.25 h-4.75 w-2.25"><use href="#dots"/></svg><span class="ml-2 pb-[0.1875rem] text-[#777]">Enter key name here</span></div>
    </div>
    <footer class="flex h-7.5 items-center border-t border-[#d4d4da] bg-white px-2.5 text-[#a9a9a9]">
      <svg class="size-3.5"><use href="#help"/></svg><svg class="ml-2.25 h-3.5 w-3.25"><use href="#play"/></svg><svg class="ml-auto size-3.75"><use href="#search"/></svg><svg class="ml-2.5 size-3.5"><use href="#gear"/></svg>
    </footer>
  </section>
  <div class="flex w-10 shrink-0 justify-center pt-[0.83rem] text-[#adadad]"><svg class="size-[0.71rem]"><use href="#plus"/></svg></div>

  <!-- Note: Grab User Details -->
  <section class="w-57 shrink-0 overflow-hidden rounded-md bg-[#f7f7f7] pb-2.5 font-[Inter,sans-serif] whitespace-nowrap text-[#1b1b20] shadow-[0_0.0625rem_0.75rem_rgba(0,0,0,0.15)]">
    <header class="flex h-8.75 items-center bg-[#4fd083] pr-[0.3125rem] pl-2.75 text-white">
      <svg class="size-3"><use href="#sticky"/></svg><h2 class="ml-2.75 text-[0.84rem] font-medium">Note</h2><svg class="ml-2.5 size-3"><use href="#help"/></svg><svg class="mb-3.5 ml-auto size-2.75"><use href="#close"/></svg>
    </header>
    <div class="mt-2.5 bg-white px-2.75 pt-[0.45rem] pb-[0.33rem] text-[0.8125rem] leading-[1.3925rem] tracking-[-0.006em]">
      <h3 class="ml-0.5 text-sm leading-[1.3925rem] font-bold tracking-[0.03em]">&lt;- Grab User Details</h3>
      <p class="mt-[0.8rem]">The body result of the <code class="rounded-md bg-[#eff0f2] px-1.25 py-[0.1875rem] font-['DejaVu_Sans_Mono',monospace] text-[0.6875rem] tracking-normal whitespace-pre">Jira – <br>Custom API Action</code> will be a list<br>of one object.</p>
      <p class="mt-[0.95rem]"><code class="rounded-md bg-[#eff0f2] px-1.25 py-[0.1875rem] font-['DejaVu_Sans_Mono',monospace] text-[0.6875rem] tracking-normal whitespace-pre">List – At</code> is used to grab the<br>accountID from the response,<br>then is returned to the calling<br>flow.</p>
    </div>
  </section>
  <div class="flex w-10 shrink-0 justify-center pt-[0.83rem] text-[#adadad]"><svg class="size-[0.71rem]"><use href="#plus"/></svg></div>

  <!-- Flow Control: Return -->
  <section class="w-60 shrink-0 overflow-hidden rounded-md bg-[#f9f9f9] shadow-[0_0.0625rem_0.75rem_rgba(0,0,0,0.15)]">
    <header class="flex h-13.75 border-b border-[#d4d4da] bg-white pt-2.5 pr-[0.3125rem] pl-1.75">
      <svg class="size-8.5 shrink-0"><use href="#bulb"/></svg>
      <div class="mt-[-0.0625rem] ml-1.75 grow">
        <p class="text-xs leading-4 text-[#6c6c78]">Flow Control</p>
        <h2 class="text-[0.9375rem] leading-4 tracking-[0.012em] text-[#1b1b20]">Return</h2>
      </div>
      <svg class="-mt-1.25 size-2.75 text-[#666]"><use href="#close"/></svg>
    </header>
    <div class="h-50 px-4.25 pt-2">
      <div class="flex h-5.75 items-center pt-0.5 pr-0.5 text-xs font-medium"><span>accountId</span><span class="ml-auto text-sm font-normal text-[#6b7784]">Aa</span><svg class="ml-0.5 h-1.25 w-1.75"><use href="#caret"/></svg></div>
      <div class="flex h-8.75 items-center overflow-hidden rounded-[0.1875rem] border border-[#bdbdbd] bg-white"><i class="h-full w-[0.28rem] bg-[#8c6e97]"></i><svg class="ml-1.25 h-4.75 w-2.25"><use href="#dots"/></svg><svg class="ml-1 size-6.25"><use href="#list"/></svg><span class="ml-1 pb-[0.1875rem] tracking-[0.01em]">accountId</span></div>
      <div class="flex h-5.75 items-center pt-0.5 text-xs font-medium text-[#a0a0a0]">Click or drop here to create</div>
      <div class="h-8.75 rounded-[0.125rem] border border-[#e6e6e6] bg-[#fafafa]"></div>
    </div>
    <footer class="flex h-7.5 items-center border-t border-[#d4d4da] bg-white px-2.5 text-[#a9a9a9]">
      <svg class="size-3.5"><use href="#help"/></svg><svg class="ml-2.25 h-3.5 w-3.25"><use href="#play"/></svg><svg class="ml-auto size-3.75"><use href="#search"/></svg><svg class="ml-2.5 size-3.5"><use href="#gear"/></svg>
    </footer>
  </section>

  <!-- next step -->
  <aside class="ml-7.5 flex w-58.75 shrink-0 flex-col items-center">
    <div class="relative flex h-90 w-full flex-col items-center rounded-[0.1875rem] bg-[#ebebed] pt-12.5">
      <svg class="absolute inset-0 size-full" viewBox="0 0 470 720" preserveAspectRatio="none"><rect x="2" y="2" width="466" height="716" rx="5" fill="none" stroke="#bababa" stroke-width="4" stroke-dasharray="12 12"/></svg>
      <h2 class="text-base leading-5 font-black text-[#6c6c78]">And then do this</h2>
      <button class="mt-15 h-9.25 w-31.25 rounded-[0.125rem] border border-[#1a62dd] bg-white pb-[0.1875rem] text-sm tracking-[0.012em] text-[#1a62dd]">Add app action</button>
      <p class="flex h-8.75 items-center pb-[0.0625rem] font-medium text-[#666]">- or -</p>
      <button class="h-9.25 w-31.25 rounded-[0.125rem] border border-[#1a62dd] bg-white pb-[0.1875rem] text-sm tracking-[0.012em] text-[#1a62dd]">Add function</button>
      <p class="mt-auto mb-[1.36rem] flex items-center gap-1 text-[0.79rem] leading-4 font-medium text-[#8e8e99]"><svg class="size-3.5"><use href="#help"/></svg>What is an app action or function?</p>
    </div>
    <button class="mt-2 h-9.25 w-31.25 rounded-[0.125rem] border border-[#1a62dd] bg-white pb-[0.1875rem] text-sm tracking-[0.012em] text-[#1a62dd]">Add note</button>
  </aside>
</main>
</body>
</html>
